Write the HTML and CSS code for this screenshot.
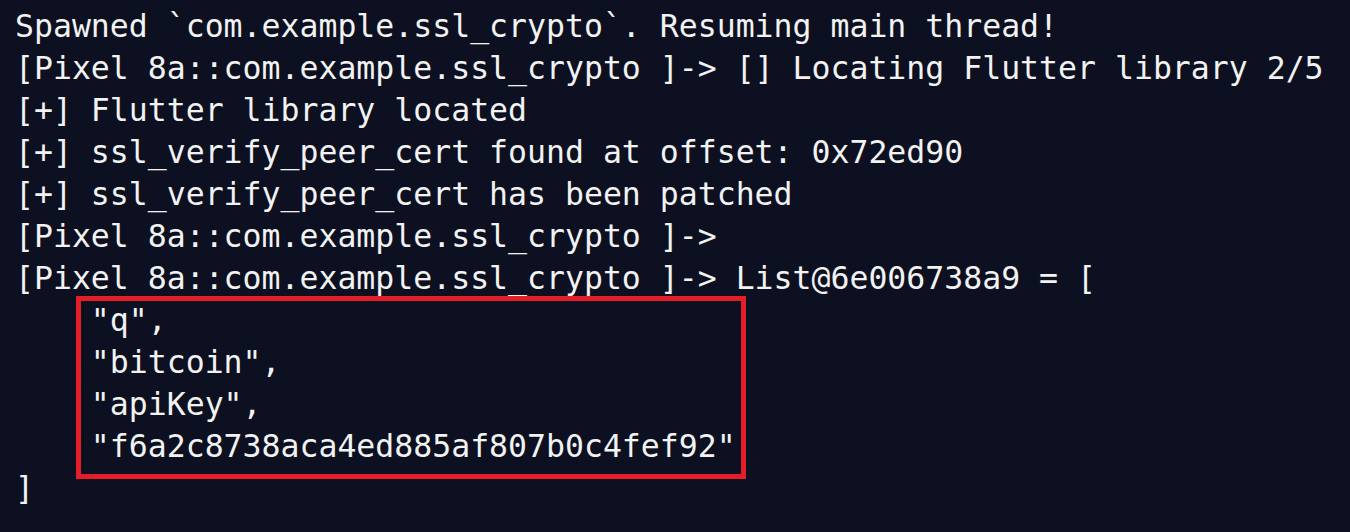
FILE: index.html
```html
<!DOCTYPE html>
<html lang="en">
<head>
<meta charset="utf-8">
<title>Frida console</title>
<link rel="stylesheet" href="styles.css">
</head>
<body>
<div class="terminal">
  <div class="line">Spawned `com.example.ssl_crypto`. Resuming main thread!</div>
  <div class="line">[Pixel 8a::com.example.ssl_crypto ]-&gt; [] Locating Flutter library 2/5</div>
  <div class="line">[+] Flutter library located</div>
  <div class="line">[+] ssl_verify_peer_cert found at offset: 0x72ed90</div>
  <div class="line">[+] ssl_verify_peer_cert has been patched</div>
  <div class="line">[Pixel 8a::com.example.ssl_crypto ]-&gt;</div>
  <div class="line">[Pixel 8a::com.example.ssl_crypto ]-&gt; List@6e006738a9 = [</div>
  <div class="highlight">
    <div class="line">    "q",</div>
    <div class="line">    "bitcoin",</div>
    <div class="line">    "apiKey",</div>
    <div class="line">    "f6a2c8738aca4ed885af807b0c4fef92"</div>
  </div>
  <div class="line">]</div>
</div>
</body>
</html>
```
FILE: styles.css
```css
html, body {
  margin: 0;
  padding: 0;
  background: #0c1020;
}
body {
  width: 1350px;
  height: 532px;
  overflow: hidden;
}
.terminal {
  padding: 5px 0 0 15px;
  font-family: "DejaVu Sans Mono", "Liberation Mono", monospace;
  font-size: 31.5px;
  line-height: 42px;
  color: #f2f2f2;
}
.line {
  white-space: pre;
}
.highlight {
  position: relative;
}
.highlight::before {
  content: "";
  position: absolute;
  left: 61px;
  top: -3px;
  width: 670px;
  height: 183px;
  box-sizing: border-box;
  border: 5px solid #e41d27;
}
```
